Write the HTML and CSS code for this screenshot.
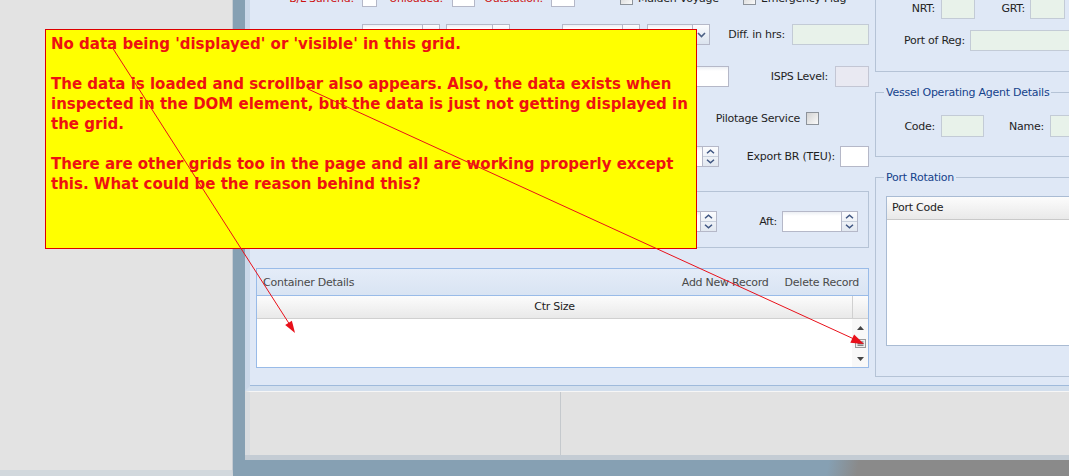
FILE: index.html
```html
<!DOCTYPE html>
<html lang="en">
<head>
  <meta charset="UTF-8">
  <meta name="viewport" content="width=device-width, initial-scale=1.0">
  <title>Vessel Call</title>
  <link rel="stylesheet" href="styles.css">
</head>
<body>
<div class="side"></div>
<div class="win">
  <div class="win-body">
    <div class="form">

      <div class="col-main">
        <!-- flags row, mostly scrolled off the top -->
        <div class="row row-flags">
          <span class="lbl red w-bl">B/L Surrend:</span>
          <span class="inp box-a"></span>
          <span class="lbl red w-ul">Unloaded:</span>
          <span class="inp box-b"></span>
          <span class="lbl red w-os">Outstation:</span>
          <span class="inp box-c"></span>
          <span class="chk chk-maiden"></span>
          <span class="chk-lbl lbl-maiden">Maiden Voyage</span>
          <span class="chk"></span>
          <span class="chk-lbl lbl-emerg">Emergency Flag</span>
        </div>

        <div class="row r2">
          <span class="lbl w-eta">ETA:</span>
          <span class="field f-eta"><span class="inp"></span><span class="trig trig-date"><i></i></span></span>
          <span class="field f-etatime"><span class="inp"></span><span class="trig"><svg width="9" height="6" viewBox="0 0 9 6"><path d="M1 1l3.5 3.5L8 1" fill="none" stroke="#4d6185" stroke-width="1.6"/></svg></span></span>
          <span class="field f-etd"><span class="inp"></span><span class="trig trig-date"><i></i></span></span>
          <span class="field f-etdtime"><span class="inp"></span><span class="trig"><svg width="9" height="6" viewBox="0 0 9 6"><path d="M1 1l3.5 3.5L8 1" fill="none" stroke="#4d6185" stroke-width="1.6"/></svg></span></span>
          <span class="lbl w-diff">Diff. in hrs:</span>
          <span class="inp green i-diff"></span>
        </div>

        <div class="row r3">
          <span class="lbl w-berth">Berth No.:</span>
          <span class="inp i-berth"></span>
          <span class="lbl w-isps">ISPS Level:</span>
          <span class="inp lav i-isps"></span>
        </div>

        <div class="row r4">
          <span class="lbl">Pilotage Service</span>
          <span class="chk chk-pilot"></span>
        </div>

        <div class="row r5">
          <span class="lbl w-impbr">Import BR (TEU):</span>
          <span class="field f-impbr">
            <span class="inp"></span>
            <span class="spin">
              <span><svg width="9" height="5" viewBox="0 0 9 5"><path d="M1 4.2l3.5-3 3.5 3" fill="none" stroke="#3e5581" stroke-width="1.5"/></svg></span>
              <span><svg width="9" height="5" viewBox="0 0 9 5"><path d="M1 .8l3.5 3 3.5-3" fill="none" stroke="#3e5581" stroke-width="1.5"/></svg></span>
            </span>
          </span>
          <span class="lbl w-expbr">Export BR (TEU):</span>
          <span class="inp i-expbr"></span>
        </div>

        <div class="draft">
          <div class="row">
            <span class="lbl w-fwd">Fwd:</span>
            <span class="field f-fwd">
              <span class="inp"></span>
              <span class="spin">
                <span><svg width="9" height="5" viewBox="0 0 9 5"><path d="M1 4.2l3.5-3 3.5 3" fill="none" stroke="#3e5581" stroke-width="1.5"/></svg></span>
                <span><svg width="9" height="5" viewBox="0 0 9 5"><path d="M1 .8l3.5 3 3.5-3" fill="none" stroke="#3e5581" stroke-width="1.5"/></svg></span>
              </span>
            </span>
            <span class="lbl w-aft">Aft:</span>
            <span class="field f-aft">
              <span class="inp"></span>
              <span class="spin">
                <span><svg width="9" height="5" viewBox="0 0 9 5"><path d="M1 4.2l3.5-3 3.5 3" fill="none" stroke="#3e5581" stroke-width="1.5"/></svg></span>
                <span><svg width="9" height="5" viewBox="0 0 9 5"><path d="M1 .8l3.5 3 3.5-3" fill="none" stroke="#3e5581" stroke-width="1.5"/></svg></span>
              </span>
            </span>
          </div>
        </div>

        <div class="ctr">
          <div class="ctr-head">
            <span class="ctr-title">Container Details</span>
            <span class="ctr-tool">Add New Record</span>
            <span class="ctr-tool">Delete Record</span>
          </div>
          <div class="grid-hd">
            <span class="col">Ctr Size</span>
            <span class="sb"></span>
          </div>
          <div class="grid-bd">
            <div class="rows"></div>
            <div class="vscroll">
              <svg width="7" height="4" viewBox="0 0 7 4"><path d="M0 4L3.5 0 7 4z" fill="#444"/></svg>
              <svg width="11" height="9" viewBox="0 0 11 9"><rect x=".5" y=".5" width="10" height="8" fill="#eee" stroke="#999"/><path d="M2.5 3h6M2.5 4.6h6M2.5 6.2h6" stroke="#555"/></svg>
              <svg width="7" height="4" viewBox="0 0 7 4"><path d="M0 0h7L3.5 4z" fill="#444"/></svg>
            </div>
          </div>
        </div>
      </div>

      <div class="col-side">
        <div class="fs fs-vessel">
          <div class="row">
            <span class="lbl w-nrt">NRT:</span>
            <span class="inp green i-nrt"></span>
            <span class="lbl w-grt">GRT:</span>
            <span class="inp green i-grt"></span>
          </div>
          <div class="row r-port">
            <span class="lbl w-port">Port of Reg:</span>
            <span class="inp green i-port"></span>
          </div>
        </div>

        <fieldset class="fs fs-agent">
          <legend>Vessel Operating Agent Details</legend>
          <div class="row tall">
            <span class="lbl w-code">Code:</span>
            <span class="inp green i-code"></span>
            <span class="lbl w-name">Name:</span>
            <span class="inp green i-name"></span>
          </div>
        </fieldset>

        <fieldset class="fs fs-rot">
          <legend>Port Rotation</legend>
          <div class="pgrid">
            <div class="pgrid-hd">Port Code</div>
          </div>
        </fieldset>
      </div>

    </div>
    <div class="status">
      <div class="status-cell"></div>
      <div class="status-cell"></div>
    </div>
  </div>
  <div class="win-foot"></div>
</div>

<div class="note">
  <p>No data being 'displayed' or 'visible' in this grid.</p>
  <p>The data is loaded and scrollbar also appears. Also, the data exists when<br>inspected in the DOM element, but the data is just not getting displayed in<br>the grid.</p>
  <p>There are other grids too in the page and all are working properly except<br>this. What could be the reason behind this?</p>
</div>

<svg class="arrows" width="1069" height="476" viewBox="0 0 1069 476">
  <line x1="112" y1="47" x2="290" y2="325" stroke="#e8101a" stroke-width="1"/>
  <polygon points="295,333 291.9,320.7 285.2,325.1" fill="#e8101a"/>
  <line x1="308" y1="89" x2="854" y2="339" stroke="#e8101a" stroke-width="1"/>
  <polygon points="864,344 850.3,342.7 854.1,334.5" fill="#e8101a"/>
</svg>
</body>
</html>
```

FILE: styles.css
```css
* {
  box-sizing: border-box;
}
body {
  margin: 0;
  width: 1069px;
  height: 476px;
  overflow: hidden;
  display: flex;
  font-family: "DejaVu Sans", sans-serif;
  font-size: 11px;
  letter-spacing: -0.25px;
  color: #1f1f1f;
  background: #86a0b3;
}

/* desktop pieces */
.side {
  flex-shrink: 0;
  width: 233px;
  height: 476px;
  background: #e3e3e3;
  border-right: 1px solid #c6ccd2;
  border-bottom: 6px solid #d2d8dd;
}
.win {
  flex: 1;
  min-width: 0;
  padding-left: 12px;
  display: flex;
  flex-direction: column;
}
.win-body {
  height: 460px;
  display: flex;
  flex-direction: column;
  background: #c4ccd4;
}
.win-foot {
  height: 16px;
  background: linear-gradient(100deg, #86a0b3 575px, #8a8a8a 605px);
}
.form {
  flex-shrink: 0;
  height: 391px;
  display: flex;
  overflow: hidden;
  background: #dfe8f6;
  border-left: 5px solid #cbd8e9;
  border-bottom: 5px solid #d3dfed;
  box-shadow: inset 0 -1px #9fbadb;
}
.status {
  height: 64px;
  display: flex;
  background: #e2e2e2;
  border-top: 1px solid #f6f6f6;
  border-left: 5px solid #d8dce0;
}
.status-cell:first-child {
  width: 311px;
  border-right: 1px solid #c5c9cd;
}

/* columns */
.col-main {
  flex-shrink: 0;
  width: 620px;
  margin-top: -14px;
}
.col-side {
  flex-shrink: 0;
  width: 260px;
  margin-left: 5px;
}

.row {
  display: flex;
  align-items: center;
  height: 21px;
}
.row.tall { height: 22px; }
.row-flags { align-items: flex-end; }
.row-flags .lbl,
.row-flags .chk-lbl {
  line-height: 13px;
  margin-bottom: 2px;
}
.row-flags .chk { margin-bottom: 2px; }
.r2 { margin-top: 17px; }
.r3 { margin-top: 21px; }
.r4 { margin-top: 21px; justify-content: flex-end; padding-right: 51px; }
.r5 { margin-top: 17px; }
.r-port { margin-top: 11px; }

.lbl {
  flex-shrink: 0;
  text-align: right;
  padding-right: 2px;
  white-space: nowrap;
}
.red { color: #cc1111; }

.inp {
  flex-shrink: 0;
  height: 21px;
  border: 1px solid #b5b8c8;
  background: linear-gradient(#eceff4, #fff 4px);
}
.inp.green {
  background: #e8f2ea;
  border-color: #c3cbd6;
}
.inp.lav {
  background: #e9e9f2;
  border-color: #c3c6d4;
}
.field {
  flex-shrink: 0;
  display: flex;
}
.field .inp {
  flex: 1;
  min-width: 0;
}
.trig {
  width: 17px;
  height: 21px;
  display: flex;
  align-items: center;
  justify-content: center;
  border: 1px solid #b5b8c8;
  border-left: 0;
  background: linear-gradient(#fbfcfe, #dbe3ee);
}
.trig-date i {
  width: 11px;
  height: 11px;
  border: 1px solid #8b97a8;
  border-top: 3px solid #d64545;
  background: #fff;
}
.spin {
  width: 16px;
  height: 21px;
  display: flex;
  flex-direction: column;
  border: 1px solid #b5b8c8;
  border-left: 0;
  background: linear-gradient(#fbfcfe, #e2e8f0);
}
.spin span {
  flex: 1;
  display: flex;
  align-items: center;
  justify-content: center;
}
.spin span + span {
  border-top: 1px solid #c8d0dc;
}
.chk {
  flex-shrink: 0;
  width: 13px;
  height: 13px;
  border: 1px solid #8d939b;
  background: linear-gradient(135deg, #d3d3d3, #fafafa);
}
.chk-lbl { white-space: nowrap; }

/* flags row */
.w-bl { width: 106px; }
.box-a { margin-left: 6px; width: 15px; }
.w-ul { width: 68px; }
.box-b { margin-left: 7px; width: 23px; }
.w-os { width: 70px; }
.box-c { margin-left: 6px; width: 24px; }
.chk-maiden { margin-left: 45px; }
.lbl-maiden { margin-left: 5px; width: 105px; }
.lbl-emerg { margin-left: 5px; }

/* dates row */
.w-eta { width: 106px; }
.f-eta { margin-left: 6px; width: 78px; }
.f-etatime { margin-left: 6px; width: 64px; }
.f-etd { margin-left: 52px; width: 78px; }
.f-etdtime { margin-left: 7px; width: 63px; }
.w-diff { width: 77px; }
.i-diff { margin-left: 5px; width: 77px; }

.w-berth { width: 344px; }
.i-berth { margin-left: 6px; width: 129px; }
.w-isps { width: 100px; padding-right: 1px; }
.i-isps { margin-left: 6px; width: 34px; }

.chk-pilot { margin-left: 4px; }

.w-impbr { width: 344px; }
.f-impbr { margin-left: 6px; width: 119px; }
.w-expbr { width: 117px; padding-right: 1px; }
.i-expbr { margin-left: 4px; width: 29px; background: #fff; }

/* draft box */
.draft {
  margin: 24px 0 0 6px;
  width: 613px;
  height: 57px;
  padding-top: 19px;
  border: 1px solid #b5c3d6;
}
.w-fwd { width: 337px; }
.f-fwd { margin-left: 6px; width: 117px; }
.w-aft { width: 60px; padding-right: 0; }
.f-aft { margin-left: 5px; width: 76px; }

/* container grid */
.ctr {
  margin: 20px 0 0 6px;
  width: 613px;
  height: 100px;
  display: flex;
  flex-direction: column;
  border: 1px solid #99bbe8;
  background: #fff;
}
.ctr-head {
  height: 27px;
  display: flex;
  align-items: center;
  padding: 0 9px 0 6px;
  color: #4a4a4a;
  border-bottom: 1px solid #99bbe8;
  background: linear-gradient(#e4ecf8, #d9e4f3);
}
.ctr-title { flex: 1; }
.ctr-tool + .ctr-tool { margin-left: 16px; }
.grid-hd {
  height: 23px;
  display: flex;
  border-bottom: 1px solid #d0d0d0;
  background: linear-gradient(#fcfcfc, #e9e9e9);
}
.grid-hd .col {
  flex: 1;
  text-align: center;
  line-height: 22px;
  color: #222;
}
.grid-hd .sb {
  width: 16px;
  border-left: 1px solid #d0d0d0;
}
.grid-bd {
  flex: 1;
  display: flex;
}
.grid-bd .rows { flex: 1; }
.vscroll {
  width: 16px;
  display: flex;
  flex-direction: column;
  align-items: center;
  justify-content: space-between;
  padding: 7px 0 6px;
  background: #f8f8f8;
}

/* right side fieldsets */
.fs {
  margin: 0;
  min-width: 0;
  border: 1px solid #b5c3d6;
}
.fs legend {
  margin-left: 8px;
  padding: 0 2px;
  line-height: 13px;
  color: #15428b;
}
.fs-vessel {
  margin-top: -40px;
  padding: 37px 0 20px;
}
.fs-agent {
  margin-top: 14px;
  padding: 16px 0 19px;
}
.fs-rot {
  margin-top: 14px;
  padding: 12px 0 30px;
}
.w-nrt { width: 60px; padding-right: 1px; }
.i-nrt { margin-left: 5px; width: 34px; }
.w-grt { width: 51px; padding-right: 1px; }
.i-grt { margin-left: 4px; width: 35px; }
.w-port { width: 90px; padding-right: 1px; }
.i-port { margin-left: 4px; width: 140px; }
.w-code { width: 60px; padding-right: 1px; }
.i-code { margin-left: 5px; width: 43px; height: 22px; }
.w-name { width: 61px; padding-right: 1px; }
.i-name { margin-left: 5px; width: 80px; height: 22px; }

.pgrid {
  margin-left: 10px;
  width: 240px;
  height: 150px;
  border: 1px solid #a9bbd3;
  background: #fff;
}
.pgrid-hd {
  height: 23px;
  line-height: 22px;
  padding-left: 5px;
  color: #222;
  border-bottom: 1px solid #c9c9c9;
  background: linear-gradient(#fcfcfc, #e9e9e9);
}

/* annotation on top of the screenshot */
.note {
  position: absolute;
  left: 45px;
  top: 29px;
  width: 652px;
  height: 220px;
  padding: 4px 5px;
  background: #ffff00;
  border: 1px solid #dd0000;
  color: #ee1111;
  font-weight: bold;
  font-size: 15px;
  line-height: 20px;
  letter-spacing: 0;
  white-space: nowrap;
}
.note p {
  margin: 0 0 20px;
}
.arrows {
  position: absolute;
  top: 0;
  left: 0;
  pointer-events: none;
}
```
